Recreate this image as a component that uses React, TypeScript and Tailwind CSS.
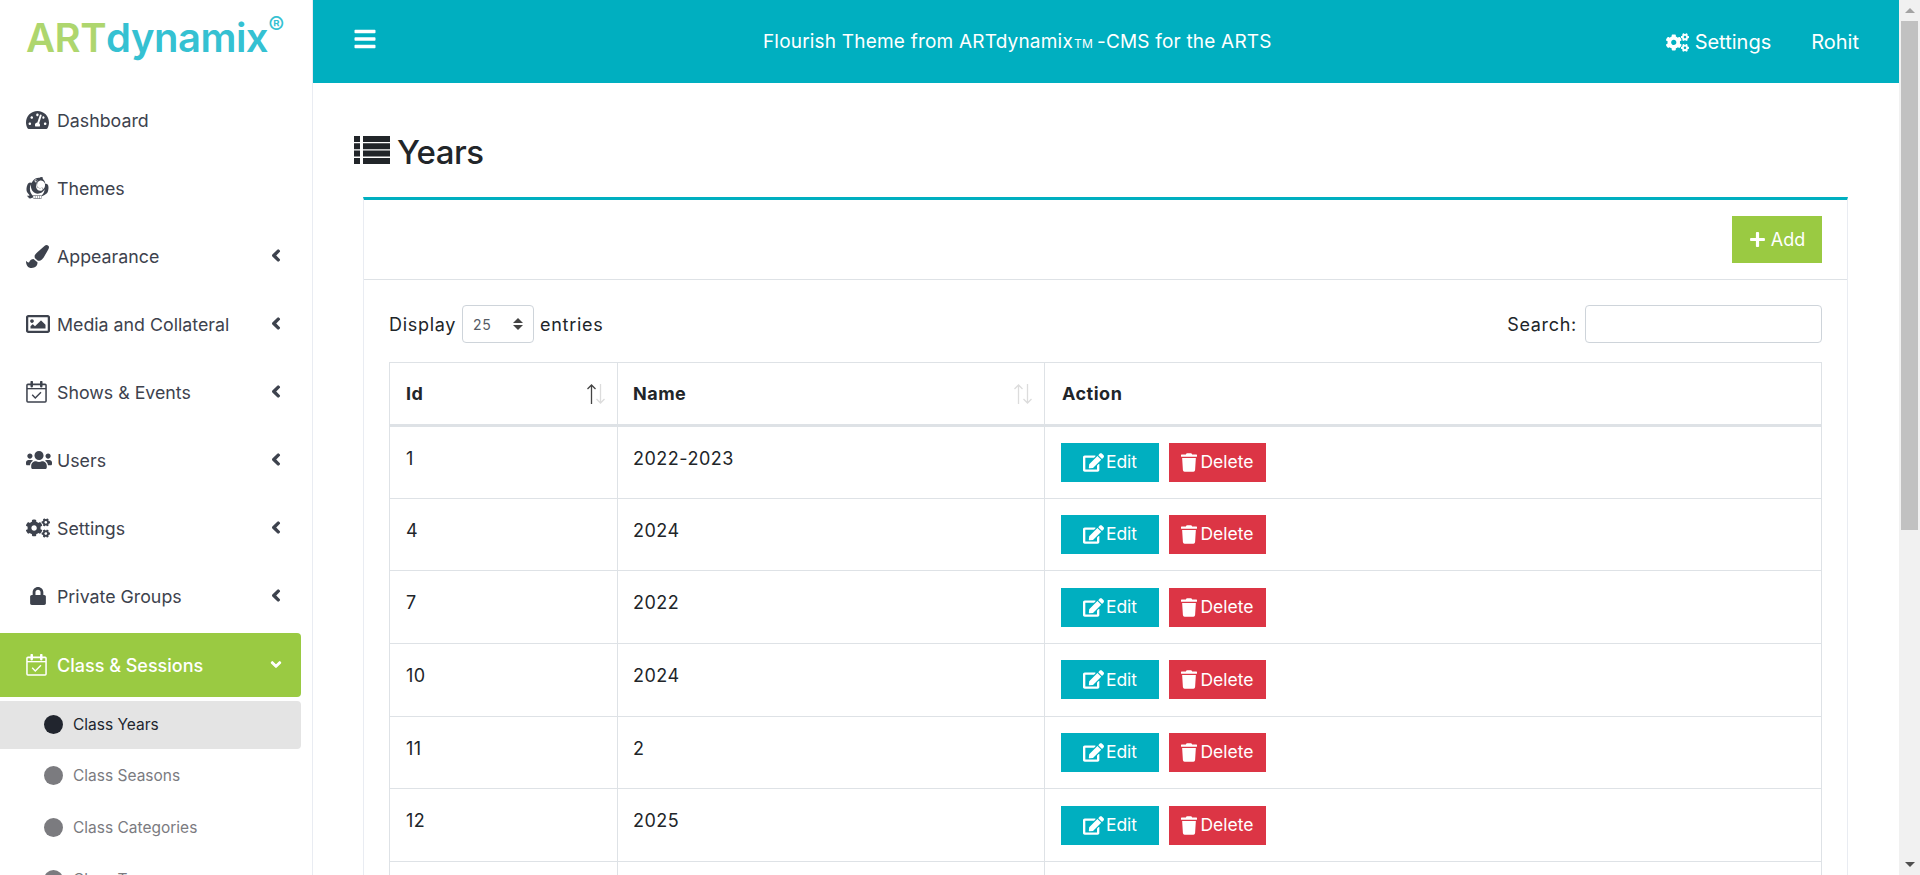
import {
  FaBars,
  FaChevronDown,
  FaChevronLeft,
  FaCogs,
  FaEdit,
  FaLock,
  FaPaintBrush,
  FaPlus,
  FaRegImage,
  FaTachometerAlt,
  FaThemeisle,
  FaTrash,
  FaUsers,
} from 'react-icons/fa';
import type { ComponentType } from 'react';

type MenuItem = { label: string; icon: ComponentType<{ className?: string }>; iconClass: string; arrow?: boolean };

function CalendarCheck({ className }: { className?: string }) {
  return (
    <svg viewBox="0 0 22 23" fill="none" stroke="currentColor" className={className}>
      <rect x="1" y="3.5" width="20" height="18.5" rx="1" strokeWidth="1.6" />
      <path d="M1 8h20" strokeWidth="1.4" />
      <path d="M6 1v4.5M16 1v4.5" strokeWidth="2.6" strokeLinecap="round" />
      <path d="M6.5 14.5l3.2 3.2 6-6" strokeWidth="1.5" />
    </svg>
  );
}

// old-style "list" glyph: square bullets with long bars
function ListIcon({ className }: { className?: string }) {
  return (
    <svg viewBox="0 0 36 28" fill="currentColor" className={className}>
      <path d="M0 0h6v6H0zM9 0h27v6H9zM0 7.3h6v6H0zM9 7.3h27v6H9zM0 14.6h6v6H0zM9 14.6h27v6H9zM0 22h6v6H0zM9 22h27v6H9z" />
    </svg>
  );
}

const menuItems: MenuItem[] = [
  { label: 'Dashboard', icon: FaTachometerAlt, iconClass: 'w-[23px] h-[22px]' },
  { label: 'Themes', icon: FaThemeisle, iconClass: 'w-[23px] h-[22px]' },
  { label: 'Appearance', icon: FaPaintBrush, iconClass: 'w-[23px] h-[23px]', arrow: true },
  { label: 'Media and Collateral', icon: FaRegImage, iconClass: 'w-[24px] h-[24px]', arrow: true },
  { label: 'Shows & Events', icon: CalendarCheck, iconClass: 'w-[21px] h-[22px]', arrow: true },
  { label: 'Users', icon: FaUsers, iconClass: 'w-[26px] h-[26px] -mt-[1px]', arrow: true },
  { label: 'Settings', icon: FaCogs, iconClass: 'w-[24px] h-[24px]', arrow: true },
  { label: 'Private Groups', icon: FaLock, iconClass: 'w-[16px] h-[18px] ml-[4px]', arrow: true },
];

const subItems = ['Class Seasons', 'Class Categories', 'Class Types'];

const years = [
  { id: '1', name: '2022-2023' },
  { id: '4', name: '2024' },
  { id: '7', name: '2022' },
  { id: '10', name: '2024' },
  { id: '11', name: '2' },
  { id: '12', name: '2025' },
];

function Sidebar() {
  return (
    <aside className="w-[313px] shrink-0 h-full overflow-hidden border-r border-[#e9ecf2] bg-white font-['Inter',sans-serif]">
      <div className="h-[83px] pl-[26px] pt-[14px] text-[40px] leading-[48px] font-semibold tracking-[-0.5px] flex items-start">
        <span className="text-[#aed66e]">ART</span>
        <span className="text-[#35c1d2]">dynamix</span>
        <span className="text-[#35c1d2] text-[24px] leading-[24px] font-normal">®</span>
      </div>
      <nav className="w-[301px] mt-[3px]">
        {menuItems.map((item) => (
          <div key={item.label} className="h-[68px] flex items-center pl-[26px] pr-[20px] text-[#3d424d] text-[17.8px]">
            <span className="w-[31px] flex justify-start">
              <item.icon className={item.iconClass} />
            </span>
            <span className="grow pt-[2px]">{item.label}</span>
            {item.arrow && <FaChevronLeft className="w-[10px] h-[13px] -translate-y-[1px] stroke-[50]" />}
          </div>
        ))}
        <div className="h-[64px] mt-[3px] flex items-center pl-[26px] pr-[18px] bg-[#9aca42] rounded-r text-white text-[18px] font-medium">
          <span className="w-[31px]">
            <CalendarCheck className="w-[21px] h-[22px]" />
          </span>
          <span className="grow">Class &amp; Sessions</span>
          <FaChevronDown className="w-[14px] h-[11px] -translate-y-[1px] stroke-[50]" />
        </div>
        <div className="h-[48px] mt-[4px] mb-[1px] flex items-center pl-[44px] bg-[#e4e4e4] rounded-r text-[#21252e] text-[15.5px]">
          <span className="w-[19px] h-[19px] rounded-full bg-[#21252e] mr-[10px] -translate-y-[1px]" />
          Class Years
        </div>
        {subItems.map((label) => (
          <div key={label} className="h-[52px] flex items-center pl-[44px] text-[#7b7b7f] text-[15.5px]">
            <span className="w-[19px] h-[19px] rounded-full bg-[#7b7b7f] mr-[10px] -translate-y-[1px]" />
            {label}
          </div>
        ))}
      </nav>
    </aside>
  );
}

function Header() {
  return (
    <header className="h-[83px] shrink-0 bg-[#00afc0] text-white flex items-center pl-[40px] pr-[40px] pt-[1px] text-[19px]">
      <FaBars className="w-[24px] h-[24px] -translate-y-[3px]" />
      <div className="grow pr-[8px] flex justify-center items-baseline tracking-[0.2px]">
        <span>Flourish Theme from ARTdynamix</span>
        <span className="text-[12px] mx-[1px]">TM</span>
        <span className="ml-[3px]">-CMS for the ARTS</span>
      </div>
      <div className="flex items-center gap-[6px] text-[20px]">
        <FaCogs className="w-[23px] h-[19px]" />
        <span>Settings</span>
      </div>
      <span className="ml-[40px] text-[20px]">Rohit</span>
    </header>
  );
}

function SortArrows({ first }: { first?: boolean }) {
  const light = '#dcdcdc';
  return (
    <svg viewBox="0 0 20 22" fill="none" strokeWidth="1.3" className="w-[20px] h-[22px]">
      <path d="M5.5 21V2M1.5 6l4-4 4 4" stroke={first ? '#444' : light} />
      <path d="M14.5 1v19M10.5 16l4 4 4-4" stroke={light} />
    </svg>
  );
}

function YearsTable() {
  return (
    <table className="w-full table-fixed border-collapse border border-[#dee2e6] text-[#212529] tracking-[0.5px]">
      <thead>
        <tr className="h-[63px] border-b-[3px] border-[#dee2e6] text-left font-bold">
          <th className="w-[228px] border-r border-[#dee2e6] px-[16px]">
            <div className="flex items-center justify-between -mr-[5px]">
              Id
              <SortArrows first />
            </div>
          </th>
          <th className="w-[427px] border-r border-[#dee2e6] pl-[15px] pr-[16px]">
            <div className="flex items-center justify-between -mr-[5px]">
              Name
              <SortArrows />
            </div>
          </th>
          <th className="pl-[17px] pr-[16px]">Action</th>
        </tr>
      </thead>
      <tbody>
        {years.map((row) => (
          <tr key={row.id} className="h-[72.7px] border-b border-[#dee2e6]">
            <td className="border-r border-[#dee2e6] px-[16px] align-top pt-[18px]">{row.id}</td>
            <td className="border-r border-[#dee2e6] pl-[15px] pr-[16px] align-top pt-[18px]">{row.name}</td>
            <td className="px-[16px]">
              <div className="flex gap-[10px] text-white text-[17.5px] tracking-normal">
                <button className="w-[98px] h-[39px] bg-[#00afc0] flex items-center justify-center gap-[2px]">
                  <FaEdit className="w-[21px] h-[19px]" />
                  Edit
                </button>
                <button className="w-[97px] h-[39px] bg-[#dc3545] flex items-center justify-center gap-[3px]">
                  <FaTrash className="w-[16px] h-[19px]" />
                  Delete
                </button>
              </div>
            </td>
          </tr>
        ))}
        <tr className="h-[72px]">
          <td className="border-r border-[#dee2e6]" />
          <td className="border-r border-[#dee2e6]" />
          <td />
        </tr>
      </tbody>
    </table>
  );
}

function Scrollbar() {
  return (
    <div className="w-[21px] shrink-0 h-full bg-[#f1f1f1] flex flex-col items-center">
      <div className="h-[21px] flex items-center justify-center">
        <div className="w-0 h-0 border-x-[5px] border-x-transparent border-b-[5px] border-b-[#a3a3a3]" />
      </div>
      <div className="w-[17px] h-[509px] bg-[#c1c1c1]" />
      <div className="grow" />
      <div className="h-[21px] flex items-center justify-center">
        <div className="w-0 h-0 border-x-[5px] border-x-transparent border-t-[5px] border-t-[#505050]" />
      </div>
    </div>
  );
}

export default function App() {
  return (
    <div className="h-[875px] w-full flex overflow-hidden bg-white font-['Inter',sans-serif]">
      <Sidebar />
      <div className="grow min-w-0 flex flex-col h-full overflow-hidden">
        <Header />
        <main className="grow overflow-hidden pl-[40px] pr-[51px] text-[18px] text-[#212529]">
          <h1 className="h-[114px] flex items-center gap-[7px] ml-[1px] pt-[26px] text-[33px] font-medium tracking-[-0.5px] text-[#212529]">
            <ListIcon className="w-[36px] h-[28px] -translate-y-[3px]" />
            Years
          </h1>
          <section className="ml-[10px] border-x border-[#e9ecf2] border-t-[3px] border-t-[#00afc0]">
            <div className="h-[80px] border-b border-[#dee2e6] flex items-center justify-end pr-[25px]">
              <button className="w-[90px] h-[47px] bg-[#9aca42] text-white text-[18px] flex items-center justify-center gap-[5px]">
                <FaPlus className="w-[17px] h-[17px]" />
                Add
              </button>
            </div>
            <div className="px-[25px] pt-[25px]">
              <div className="h-[38px] flex items-center justify-between mb-[19px] tracking-[0.7px]">
                <div className="flex items-center gap-[6px]">
                  Display
                  <span className="w-[72px] h-[38px] border border-[#ced4da] rounded flex items-center justify-between px-[10px] text-[14px] text-[#555b66]">
                    25
                    <span className="flex flex-col gap-[2px]">
                      <span className="w-0 h-0 border-x-[5px] border-x-transparent border-b-[5px] border-b-[#444]" />
                      <span className="w-0 h-0 border-x-[5px] border-x-transparent border-t-[5px] border-t-[#444]" />
                    </span>
                  </span>
                  entries
                </div>
                <div className="flex items-center gap-[8px]">
                  Search:
                  <input className="w-[237px] h-[38px] border border-[#ced4da] rounded outline-none" />
                </div>
              </div>
              <YearsTable />
            </div>
          </section>
        </main>
      </div>
      <Scrollbar />
    </div>
  );
}
